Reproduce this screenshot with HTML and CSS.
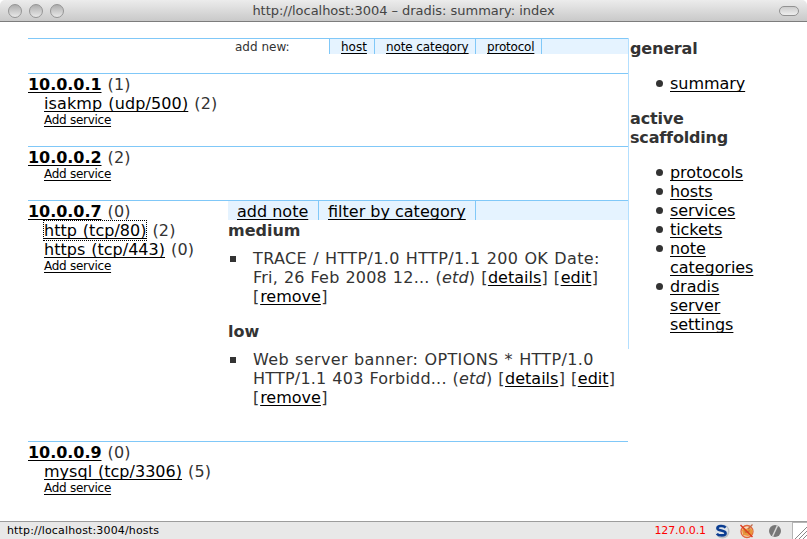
FILE: index.html
```html
<!DOCTYPE html>
<html lang="en">
<head>
<meta charset="utf-8">
<title>dradis: summary: index</title>
<link rel="stylesheet" href="styles.css">
</head>
<body>
<div class="window">
<header class="titlebar">
  <div class="lights"><i></i><i></i><i></i></div>
  <span class="title">http://localhost:3004 – dradis: summary: index</span>
  <i class="pill"></i>
</header>
<div class="page">
  <main>
    <nav class="addbar"><span class="label">add new:</span><span class="tab t1"><a href="#">host</a></span><span class="tab t2"><a href="#">note category</a></span><span class="tab t3"><a href="#">protocol</a></span></nav>
    <section class="host">
      <div class="info">
        <div><a class="ip" href="#">10.0.0.1</a> (1)</div>
        <div class="svc"><a class="loose" href="#">isakmp (udp/500)</a> (2)</div>
        <div class="svc add"><a href="#">Add service</a></div>
      </div>
    </section>
    <section class="host">
      <div class="info">
        <div><a class="ip" href="#">10.0.0.2</a> (2)</div>
        <div class="svc add"><a href="#">Add service</a></div>
      </div>
    </section>
    <section class="host open">
      <div class="info">
        <div><a class="ip" href="#">10.0.0.7</a> (0)</div>
        <div class="svc"><a class="focused" href="#">http (tcp/80)</a> (2)</div>
        <div class="svc"><a href="#">https (tcp/443)</a> (0)</div>
        <div class="svc add"><a href="#">Add service</a></div>
      </div>
      <div class="notes">
        <nav class="notebar"><span class="n1"><a href="#">add note</a></span><span class="n2"><a href="#">filter by category</a></span></nav>
        <h3 class="first">medium</h3>
        <ul>
          <li><span class="wide">TRACE / HTTP/1.0 HTTP/1.1 200 OK Date:</span><br><span class="mid">Fri, 26 Feb 2008 12... (<em>etd</em>) [<a href="#">details</a>] [<a href="#">edit</a>]</span><br><span class="mid last">[<a href="#">remove</a>]</span></li>
        </ul>
        <h3>low</h3>
        <ul>
          <li><span class="wide">Web server banner: OPTIONS * HTTP/1.0</span><br><span class="mid">HTTP/1.1 403 Forbidd... (<em>etd</em>) [<a href="#">details</a>] [<a href="#">edit</a>]</span><br><span class="mid last">[<a href="#">remove</a>]</span></li>
        </ul>
      </div>
    </section>
    <section class="host">
      <div class="info">
        <div><a class="ip" href="#">10.0.0.9</a> (0)</div>
        <div class="svc"><a href="#">mysql (tcp/3306)</a> (5)</div>
        <div class="svc add"><a href="#">Add service</a></div>
      </div>
    </section>
  </main>
  <aside>
    <h3>general</h3>
    <ul><li><a href="#">summary</a></li></ul>
    <h3>active scaffolding</h3>
    <ul>
      <li><a href="#">protocols</a></li>
      <li><a href="#">hosts</a></li>
      <li><a href="#">services</a></li>
      <li><a href="#">tickets</a></li>
      <li><a href="#">note categories</a></li>
      <li><a href="#">dradis server settings</a></li>
    </ul>
  </aside>
</div>
<footer class="status">
  <span class="url">http://localhost:3004/hosts</span>
  <span class="addr">127.0.0.1</span>
  <svg class="s-icon" width="16" height="16" viewBox="0 0 16 16"><circle cx="8.5" cy="8.5" r="7" fill="#b9bec4"/><circle cx="7.5" cy="7.5" r="6.5" fill="#dfe4e9"/><path d="M11.6 4.6C9.8 2.4 3.4 2.4 3.4 5.3c0 3 8.2 1.5 8.2 4.9 0 3-7 2.7-8.8.5" fill="none" stroke="#0b3d91" stroke-width="2.6"/></svg>
  <svg class="fox" width="16" height="16" viewBox="0 0 16 16"><circle cx="8" cy="8.5" r="6" fill="#f6d9bc" stroke="#e2653b" stroke-width="1.3"/><path d="M3 7l2-2 2 1 4-2 1 2 2 1-1 5-4 1-5-1z" fill="#e8963c"/><path d="M5 7l3 1 3-1-1 3H6z" fill="#c8782e"/><path d="M1.5 2l12 12" stroke="#dc3c20" stroke-width="1.5"/><path d="M13.5 1.5L9 6" fill="none" stroke="#c0694a" stroke-width="1.3"/></svg>
  <svg class="off" width="14" height="14" viewBox="0 0 14 14"><circle cx="7" cy="7" r="6" fill="#777"/><path d="M9.5 1.5l-5 11" stroke="#d8d8d8" stroke-width="1.5"/></svg>
  <svg class="grip" width="15" height="17" viewBox="0 0 15 17"><path d="M0 0h15v17H0z" fill="#fff"/><path d="M.5 0v17M0 .5h15" stroke="#b5b5b5"/><path d="M3 17L15 5M7 17l8-8M11 17l4-4" stroke="#888"/></svg>
</footer>
</div>
</body>
</html>
```
FILE: styles.css
```css
* { box-sizing: border-box; }
body { margin: 0; background: #fff; color: #333; font: 16px/19px "DejaVu Sans", Verdana, sans-serif; }
a { color: #000; text-decoration: underline; text-decoration-thickness: 1px; text-underline-offset: 2px; text-decoration-skip-ink: none; }
.window { height: 539px; display: flex; flex-direction: column; overflow: hidden; }
.titlebar { height: 22px; flex: none; display: flex; align-items: center; justify-content: space-between; padding: 0 8px 0 8px; background: linear-gradient(#ececec, #c9c9c9); border-bottom: 1px solid #7d7d7d; border-radius: 5px 5px 0 0; }
.lights { display: flex; gap: 7px; width: 56px; }
.lights i { width: 14px; height: 14px; border: 1px solid #959595; border-radius: 50%; background: linear-gradient(#adadad, #cbcbcb 50%, #e8e8e8); }
.title { font: 13px/20px "DejaVu Sans", sans-serif; color: #444; white-space: nowrap; letter-spacing: -.03px; }
.pill { width: 20px; height: 10px; border: 1.5px solid #929292; border-radius: 5px; background: linear-gradient(#ccc, #eee); margin-left: 36px; }
.page { flex: 1; min-height: 0; display: flex; align-items: flex-start; padding: 16px 0 0 28px; }
main { width: 600px; white-space: nowrap; }
.addbar { display: flex; height: 16px; margin-bottom: 19px; border-top: 1px solid #80c8f8; font-size: 12px; line-height: 16px; padding-left: 200px; }
.label { width: 101px; padding-left: 7px; }
.tab { border-left: 1px solid #80c8f8; background: #e5f3ff; padding-left: 11px; }
.t1 { width: 45px; }
.t2 { width: 101px; letter-spacing: -.1px; }
.t3 { width: 66px; letter-spacing: -.2px; }
.addbar::after { content: ""; flex: 1; border-left: 1px solid #80c8f8; background: #e5f3ff; }
.host { display: flex; border-top: 1px solid #80c8f8; padding-bottom: 18px; }
.info { width: 200px; padding-top: 1px; letter-spacing: .14px; word-spacing: .8px; }
.ip { font-weight: bold; letter-spacing: -.05px; }
.svc { padding-left: 16px; }
.svc a { letter-spacing: .02px; }
.svc .loose { letter-spacing: .12px; }
.add { font-size: 12px; line-height: 15px; word-spacing: 0; }
.add a { letter-spacing: -.27px; }
.focused { outline: 1px dotted #000; }
.open { height: 241px; }
.notes { width: 400px; }
.notebar { display: flex; height: 19px; background: #e5f3ff; line-height: 22px; }
.notebar span { border-right: 1px solid #80c8f8; padding-left: 9px; }
.n1 { width: 91px; }
.n2 { width: 157px; }
h3 { margin: 0; font-size: 16px; }
.notes .first { padding-top: 1px; }
.notes ul { margin: 9px 0 16px; padding-left: 25px; list-style: none; }
.notes li::before { content: ""; float: left; width: 6px; height: 6px; margin: 7px 0 0 -23px; background: #333; }
.wide { letter-spacing: .36px; word-spacing: .7px; }
.mid { letter-spacing: .21px; word-spacing: .6px; }
.mid a { letter-spacing: 0; margin: 0 .3px; }
.last { letter-spacing: .6px; }
aside { width: 132px; border-left: 1px solid #b3dfff; padding: 1px 0 0 1px; height: 311px; }
aside h3 { letter-spacing: -.17px; }
aside ul { margin: 16px 0; padding: 0 0 0 40px; list-style: none; letter-spacing: -.05px; }
aside li::before { content: ""; float: left; width: 7px; height: 7px; border-radius: 50%; margin: 6px 0 0 -14px; background: #333; }
.status { height: 18px; flex: none; display: flex; align-items: center; border-top: 1px solid #9c9c9c; background: #e8e8e8; padding-left: 7px; font: 11px/17px "DejaVu Sans", sans-serif; color: #000; white-space: nowrap; }
.url { flex: 1; letter-spacing: .15px; }
.addr { color: #f00; margin-right: 8px; letter-spacing: -.1px; }
.fox { margin-left: 9px; }
.off { margin: 0 10px 0 13px; }
```
